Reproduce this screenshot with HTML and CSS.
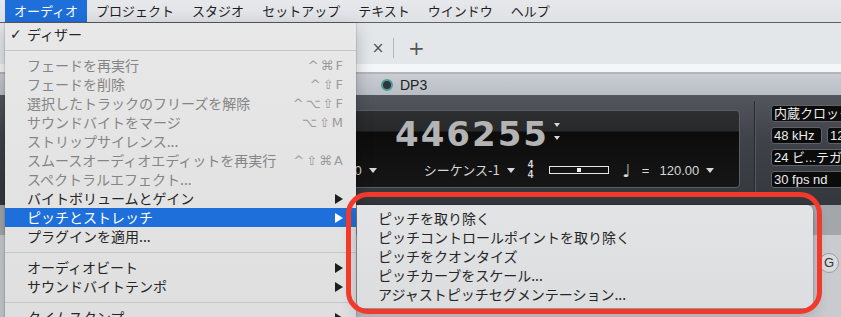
FILE: index.html
```html
<!DOCTYPE html>
<html lang="ja">
<head>
    <meta charset="UTF-8">
    <meta name="viewport" content="width=device-width, initial-scale=1.0">
    <title>オーディオ メニュー</title>
    <link rel="stylesheet" href="styles.css">
</head>
<body>
    <div class="screen">
        <div class="menubar">
            <span class="mb-item active">オーディオ</span>
            <span class="mb-item">プロジェクト</span>
            <span class="mb-item">スタジオ</span>
            <span class="mb-item">セットアップ</span>
            <span class="mb-item">テキスト</span>
            <span class="mb-item">ウインドウ</span>
            <span class="mb-item">ヘルプ</span>
        </div>

        <div class="app">
            <div class="toolbar">
                <span class="tab-close">×</span>
                <span class="tab-divider"></span>
                <span class="tab-add">+</span>
            </div>
            <div class="strip"></div>
            <div class="titlebar">
                <span class="doc-icon"></span>
                <span class="doc-name">DP3</span>
            </div>

            <div class="control">
                <div class="counter">
                    <div class="counter-main">
                        <span class="digits">446255</span>
                        <span class="spinner">
                            <span class="tri-down small"></span>
                            <span class="tri-down small"></span>
                        </span>
                    </div>
                    <div class="counter-row">
                        <span class="cr-text first">000</span>
                        <span class="tri-down"></span>
                        <span class="cr-text seq">シーケンス-1</span>
                        <span class="tri-down"></span>
                        <span class="meter">
                            <span>4</span>
                            <span>4</span>
                        </span>
                        <span class="slider"><span class="slider-knob"></span></span>
                        <span class="note">♩</span>
                        <span class="cr-text eq">=</span>
                        <span class="cr-text tempo">120.00</span>
                        <span class="tri-down"></span>
                    </div>
                </div>
                <div class="v-divider"></div>
                <div class="settings">
                    <div class="set-box wide">内蔵クロック</div>
                    <div class="set-row">
                        <div class="set-box">48 kHz</div>
                        <div class="set-box wide">128</div>
                    </div>
                    <div class="set-box wide">24 ビ...テガー</div>
                    <div class="set-box wide">30 fps nd</div>
                </div>
            </div>

            <div class="tracks">
                <div class="tracks-head"></div>
                <div class="tracks-body">
                    <span class="g-btn">G</span>
                </div>
            </div>
        </div>

        <!-- オーディオ menu -->
        <div class="menu main-menu">
            <div class="menu-item"><span class="check">✓</span>ディザー</div>
            <div class="menu-sep"></div>
            <div class="menu-item disabled"><span class="label">フェードを再実行</span><span class="keys">^⌘F</span></div>
            <div class="menu-item disabled"><span class="label">フェードを削除</span><span class="keys">^⇧F</span></div>
            <div class="menu-item disabled"><span class="label">選択したトラックのフリーズを解除</span><span class="keys">^⌥⇧F</span></div>
            <div class="menu-item disabled"><span class="label">サウンドバイトをマージ</span><span class="keys">⌥⇧M</span></div>
            <div class="menu-item disabled"><span class="label">ストリップサイレンス...</span></div>
            <div class="menu-item disabled"><span class="label">スムースオーディオエディットを再実行</span><span class="keys">^⇧⌘A</span></div>
            <div class="menu-item disabled"><span class="label">スペクトラルエフェクト...</span></div>
            <div class="menu-item"><span class="label">バイトボリュームとゲイン</span><span class="arrow"></span></div>
            <div class="menu-item selected"><span class="label">ピッチとストレッチ</span><span class="arrow"></span></div>
            <div class="menu-item"><span class="label">プラグインを適用...</span></div>
            <div class="menu-sep"></div>
            <div class="menu-item"><span class="label">オーディオビート</span><span class="arrow"></span></div>
            <div class="menu-item"><span class="label">サウンドバイトテンポ</span><span class="arrow"></span></div>
            <div class="menu-sep"></div>
            <div class="menu-item"><span class="label">タイムスタンプ</span><span class="arrow"></span></div>
        </div>

        <!-- ピッチとストレッチ submenu -->
        <div class="menu sub-menu">
            <div class="menu-item">ピッチを取り除く</div>
            <div class="menu-item">ピッチコントロールポイントを取り除く</div>
            <div class="menu-item">ピッチをクオンタイズ</div>
            <div class="menu-item">ピッチカーブをスケール...</div>
            <div class="menu-item">アジャストピッチセグメンテーション...</div>
        </div>

        <div class="callout"></div>
    </div>
</body>
</html>
```

FILE: styles.css
```css
body {
    margin: 0;
    padding: 0;
    font-family: "Noto Sans CJK JP", "Noto Sans", sans-serif;
}

.screen {
    position: relative;
    width: 841px;
    height: 317px;
    overflow: hidden;
    background-color: #c9cbce;
}

/* menu bar */

.menubar {
    display: flex;
    height: 22px;
    padding-left: 5px;
    background: linear-gradient(#e6e8eb, #dfe1e5);
    border-bottom: 1px solid #5e6166;
    font-size: 13px;
    line-height: 22px;
    color: #1e1e1e;
}

.mb-item {
    padding: 0 9px;
}

.mb-item.active {
    background-color: #1e6fd9;
    color: #fff;
}

/* application behind the menu */

.toolbar {
    display: flex;
    align-items: center;
    height: 20px;
    padding: 15px 0 6px 371px;
    background-color: #e4e7ea;
    color: #555;
}

.tab-close {
    width: 14px;
    text-align: center;
    font-family: "DejaVu Sans", sans-serif;
    font-size: 15px;
}

.tab-divider {
    width: 1px;
    height: 20px;
    margin-left: 8px;
    background-color: #b3b6ba;
}

.tab-add {
    width: 14px;
    margin-left: 14px;
    text-align: center;
    font-family: "DejaVu Sans", sans-serif;
    font-size: 20px;
    line-height: 20px;
}

.strip {
    height: 8px;
    background-color: #f5f6f7;
    border-bottom: 2px solid #b2b5ba;
}

.titlebar {
    display: flex;
    align-items: center;
    gap: 7px;
    height: 21px;
    padding-left: 381px;
    background: linear-gradient(#c9cdd3, #b9bdc4);
}

.doc-icon {
    width: 8px;
    height: 8px;
    border-radius: 50%;
    border: 2px solid #4e9d98;
    background-color: #30363b;
}

.doc-name {
    font-family: "Liberation Sans", sans-serif;
    font-size: 14px;
    color: #222;
}

.control {
    display: flex;
    height: 110px;
    background: linear-gradient(#53575d, #3f4248 40%, #34373c);
}

.control > div {
    flex-shrink: 0;
}

.counter {
    width: 344px;
    height: 70px;
    margin: 15px 0 0 150px;
    padding: 6px 0 0 244px;
    border: 1px solid #5b5e63;
    border-radius: 4px;
    background: linear-gradient(#2d2e30, #28292a 20px, #0c0c0c 21px, #161616);
    color: #d6d6d6;
}

.counter-main {
    display: flex;
    align-items: flex-start;
    height: 34px;
}

.digits {
    font-family: "DejaVu Sans", sans-serif;
    font-weight: bold;
    font-size: 34px;
    line-height: 34px;
    letter-spacing: 2px;
    color: #b4b4b4;
}

.spinner {
    display: flex;
    flex-direction: column;
    gap: 9px;
    margin: 6px 0 0 5px;
}

.tri-down {
    flex-shrink: 0;
    width: 0;
    height: 0;
    border-left: 4px solid transparent;
    border-right: 4px solid transparent;
    border-top: 5px solid #d8d8d8;
}

.tri-down.small {
    border-left-width: 3px;
    border-right-width: 3px;
    border-top-width: 4px;
}

.counter-row {
    display: flex;
    align-items: center;
    height: 16px;
    margin: 11px 0 0 -55px;
    font-family: "Liberation Sans", "Noto Sans CJK JP", sans-serif;
    font-size: 13px;
    white-space: nowrap;
}

.counter-row > span {
    flex-shrink: 0;
}

.counter-row .tri-down {
    margin-left: 7px;
}

.cr-text.seq {
    margin-left: 47px;
    font-family: "Noto Sans CJK JP", sans-serif;
    font-size: 13px;
    line-height: 16px;
}

.meter {
    display: flex;
    flex-direction: column;
    margin-left: 13px;
    font-weight: bold;
    font-size: 10px;
    line-height: 10px;
}

.slider {
    display: flex;
    justify-content: center;
    align-items: center;
    width: 58px;
    height: 6px;
    margin-left: 16px;
    border: 1px solid #e6e6e6;
}

.slider-knob {
    width: 4px;
    height: 4px;
    background-color: #f0f0f0;
}

.note {
    margin-left: 13px;
    font-family: "DejaVu Sans", sans-serif;
    font-size: 18px;
}

.cr-text.eq {
    margin-left: 11px;
}

.cr-text.tempo {
    margin-left: 10px;
}

.v-divider {
    width: 1px;
    height: 96px;
    margin: 6px 0 0 14px;
    background-color: #25282c;
    border-right: 1px solid #575b61;
}

.settings {
    display: flex;
    flex-direction: column;
    gap: 5px;
    margin: 10px 0 0 15px;
}

.set-row {
    display: flex;
    gap: 5px;
}

.set-box {
    flex-shrink: 0;
    width: 47px;
    height: 15px;
    padding-left: 2px;
    border: 1px solid #5f6368;
    border-radius: 3px;
    background-color: #0b0b0b;
    font-family: "Liberation Sans", "Noto Sans CJK JP", sans-serif;
    font-size: 13px;
    line-height: 15px;
    color: #ececec;
    white-space: nowrap;
    overflow: hidden;
}

.set-box.wide {
    width: 110px;
}

.tracks-head {
    height: 30px;
    background-color: #a3a7ac;
}

.tracks-body {
    display: flex;
    justify-content: flex-end;
    padding: 18px 2px 0 0;
}

.g-btn {
    width: 18px;
    height: 18px;
    border: 1px solid #9a9da1;
    border-radius: 50%;
    background-color: #dadbdd;
    font-family: "Liberation Sans", sans-serif;
    font-size: 13px;
    line-height: 18px;
    text-align: center;
    color: #333;
}

/* menus */

.menu {
    position: absolute;
    font-size: 14px;
    color: #262626;
    box-shadow: 0 6px 16px rgba(0, 0, 0, 0.25), 0 0 0 0.5px rgba(0, 0, 0, 0.2);
}

.main-menu {
    left: 5px;
    top: 23px;
    width: 351px;
    height: 320px;
    padding-top: 2px;
    background: linear-gradient(#e8e8e8, #dedede);
}

.sub-menu {
    left: 357px;
    top: 205px;
    width: 456px;
    padding: 4px 0;
    border-radius: 0 6px 6px 6px;
    background: linear-gradient(#e3e4e5, #dcdddf);
}

.menu-item {
    display: flex;
    align-items: center;
    height: 19px;
    line-height: 19px;
    padding: 0 11px 0 22px;
    white-space: nowrap;
}

.sub-menu .menu-item {
    padding-left: 21px;
}

.menu-item .label {
    flex: 1;
}

.menu-item.disabled {
    color: #858585;
}

.menu-item.selected {
    background-color: #1e6fd9;
    color: #fff;
}

.check {
    width: 17px;
    margin-left: -17px;
    font-family: "DejaVu Sans", sans-serif;
    font-weight: bold;
    font-size: 14px;
}

.keys {
    font-family: "DejaVu Sans", sans-serif;
    font-size: 13px;
    letter-spacing: 2px;
    color: #9b9b9b;
}

.arrow {
    width: 0;
    height: 0;
    margin-right: 2px;
    border-top: 5px solid transparent;
    border-bottom: 5px solid transparent;
    border-left: 8px solid #1e1e1e;
}

.selected .arrow {
    border-left-color: #fff;
}

.menu-sep {
    height: 1px;
    margin: 6px 0 5px;
    background-color: #c6c6c6;
}

/* red annotation frame */

.callout {
    position: absolute;
    left: 346px;
    top: 192px;
    width: 466px;
    height: 112px;
    border: 5px solid #f2392b;
    border-radius: 22px;
}
```
